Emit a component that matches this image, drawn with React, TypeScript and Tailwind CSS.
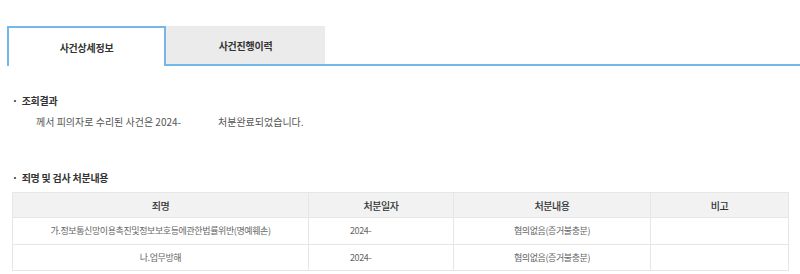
const rows = [
  { name: "가.정보통신망이용촉진및정보보호등에관한법률위반(명예훼손)", date: "2024-", result: "혐의없음(증거불충분)", note: "" },
  { name: "나.업무방해", date: "2024-", result: "혐의없음(증거불충분)", note: "" },
];

export default function App() {
  return (
    <div
      className="h-[274px] w-[800px] overflow-hidden bg-white pt-[26px] text-[#333]"
      style={{ fontFamily: '"Noto Sans CJK KR", "Noto Sans", sans-serif' }}
    >
      {/* tabs */}
      <div className="flex h-[40px] items-stretch pl-[7px]">
        <div className="flex w-[159px] items-center justify-center border-2 border-b-0 border-[#74b8e7] text-[10px] font-bold tracking-tight">
          사건상세정보
        </div>
        <div className="flex w-[159px] items-center justify-center border-b-2 border-[#74b8e7] bg-[#ebebeb] text-[10px] font-bold tracking-tight">
          사건진행이력
        </div>
        <div className="flex-1 border-b-2 border-[#74b8e7]" />
      </div>

      <div className="px-[12px]">
        <h3 className="mt-[28px] flex items-center gap-[4px] text-[10px] font-bold leading-[14px] tracking-tight">
          <span>·</span>
          <span>조회결과</span>
        </h3>
        <p className="mt-[7px] flex pl-[24px] text-[10px] leading-[14px] text-[#555]">
          <span className="w-[182px]">께서 피의자로 수리된 사건은 2024-</span>
          <span>처분완료되었습니다.</span>
        </p>

        <h3 className="mt-[42px] flex items-center gap-[4px] text-[10px] font-bold leading-[14px] tracking-tight">
          <span>·</span>
          <span>죄명 및 검사 처분내용</span>
        </h3>

        <table className="mt-[7px] w-[776px] table-fixed border-collapse text-center tracking-tight">
          <colgroup>
            <col className="w-[296px]" />
            <col className="w-[145px]" />
            <col className="w-[197px]" />
            <col className="w-[138px]" />
          </colgroup>
          <thead>
            <tr className="h-[25px] bg-[#f2f2f2] text-[10px] text-[#333]">
              <th className="border border-[#e6e6e6] font-medium">죄명</th>
              <th className="border border-[#e6e6e6] font-medium">처분일자</th>
              <th className="border border-[#e6e6e6] font-medium">처분내용</th>
              <th className="border border-[#e6e6e6] font-medium">비고</th>
            </tr>
          </thead>
          <tbody className="text-[9px] text-[#666]">
            {rows.map((r, i) => (
              <tr key={r.name} className={i === 0 ? "h-[27px]" : "h-[26px]"}>
                <td className="border border-[#e6e6e6]">{r.name}</td>
                <td className="border border-[#e6e6e6]">
                  <span className="inline-block w-[62px] text-left">{r.date}</span>
                </td>
                <td className="border border-[#e6e6e6]">{r.result}</td>
                <td className="border border-[#e6e6e6]">{r.note}</td>
              </tr>
            ))}
          </tbody>
        </table>
      </div>
    </div>
  );
}
